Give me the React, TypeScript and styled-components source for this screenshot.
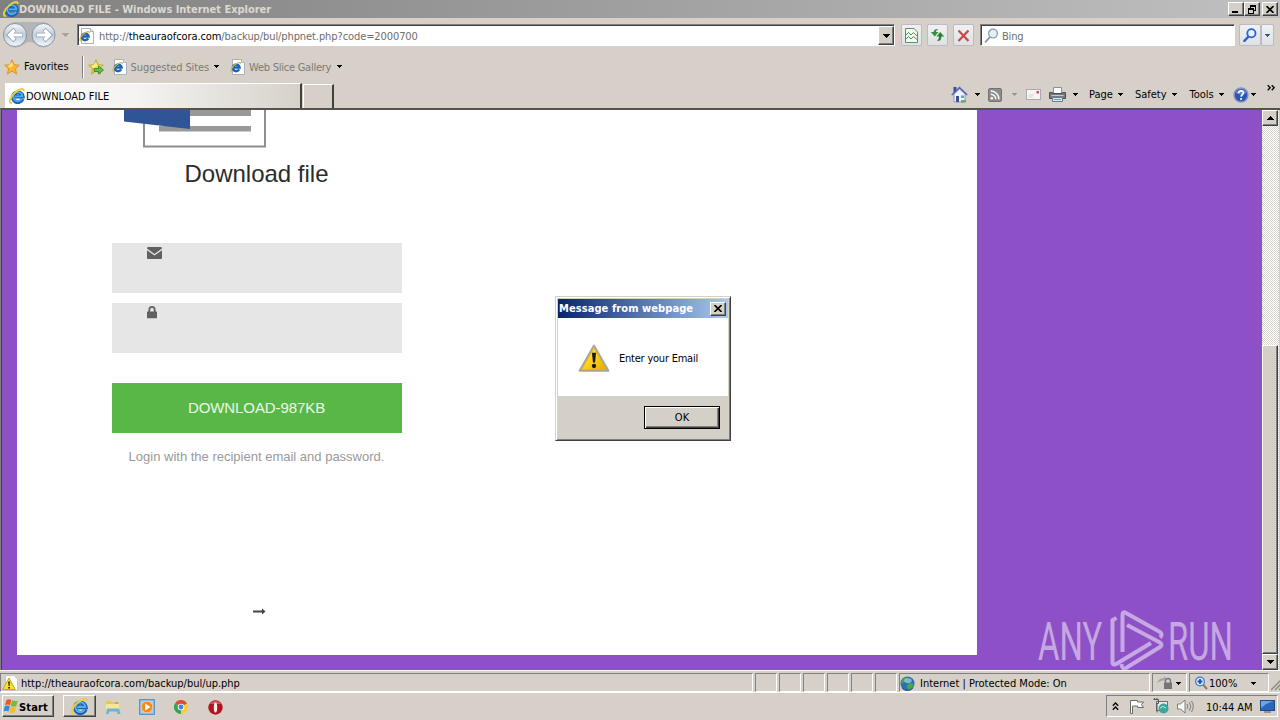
import React from 'react';
import styled, { createGlobalStyle, css } from 'styled-components';

const GlobalStyle = createGlobalStyle`
  * { box-sizing: border-box; }
  body {
    margin: 0;
    overflow: hidden;
    background: #d4d0c8;
    font-family: 'DejaVu Sans Condensed', 'DejaVu Sans', sans-serif;
    font-size: 11px;
    color: #000;
  }
  svg { display: block; flex: none; }
`;

const raised = css`
  border: 1px solid;
  border-color: #fff #404040 #404040 #fff;
  box-shadow: inset -1px -1px 0 #808080;
  background: #d4d0c8;
`;

const Screen = styled.div`
  width: 1280px;
  height: 720px;
  display: flex;
  flex-direction: column;
  background: #d6d0c8;
  overflow: hidden;
`;

const Label = styled.span<{ $ls?: number; $color?: string; $bold?: boolean; $ml?: number; $drop?: number }>`
  white-space: pre;
  line-height: 14px;
  padding-top: ${(p) => p.$drop ?? 0}px;
  letter-spacing: ${(p) => p.$ls ?? 0}px;
  color: ${(p) => p.$color ?? 'inherit'};
  font-weight: ${(p) => (p.$bold ? 700 : 400)};
  margin-left: ${(p) => p.$ml ?? 0}px;
`;

const Gap = styled.span<{ $w: number }>`
  flex: none;
  width: ${(p) => p.$w}px;
`;

const Grow = styled.span`
  flex: 1;
`;

/* ---------- browser chrome ---------- */

const TitleBar = styled.header`
  height: 18px;
  flex: none;
  display: flex;
  align-items: center;
  padding: 0 2px 0 3px;
  background: linear-gradient(90deg, #808080, #c0c0c0);
  color: #dcd8d0;
`;

const WindowButton = styled.button<{ $gap?: boolean }>`
  ${raised}
  width: 16px;
  height: 14px;
  flex: none;
  padding: 0;
  margin-left: ${(p) => (p.$gap ? 2 : 0)}px;
  display: flex;
  align-items: center;
  justify-content: center;
`;

const AddressRow = styled.div`
  height: 34px;
  flex: none;
  display: flex;
  align-items: center;
  padding-left: 2px;
`;

const SunkenBox = styled.div<{ $w: number }>`
  width: ${(p) => p.$w}px;
  height: 22px;
  display: flex;
  align-items: center;
  background: #fff;
  border: 1px solid;
  border-color: #808080 #fff #fff #808080;
  box-shadow: inset 1px 1px 0 #404040;
  padding: 1px 0 0 1px;
`;

const DropButton = styled.div`
  ${raised}
  width: 16px;
  height: 19px;
  display: flex;
  align-items: center;
  justify-content: center;
`;

const ToolButton = styled.div<{ $w?: number }>`
  width: ${(p) => p.$w ?? 21}px;
  height: 22px;
  display: flex;
  align-items: center;
  justify-content: center;
  border: 1px solid #b9bcc4;
  border-radius: 2px;
  background: linear-gradient(#f1f1f2, #dfe1e6);
`;

const FavoritesRow = styled.div`
  height: 29px;
  flex: none;
  display: flex;
  align-items: center;
  padding-left: 4px;
`;

const Divider = styled.span`
  width: 2px;
  height: 22px;
  border-left: 1px solid #808080;
  border-right: 1px solid #fff;
`;

const TabRow = styled.div`
  height: 27px;
  flex: none;
  display: flex;
  align-items: flex-start;
  padding: 1px 4px 0 5px;
`;

const Tab = styled.div`
  width: 297px;
  height: 25px;
  margin-top: 1px;
  display: flex;
  align-items: center;
  padding: 0 0 0 3px;
  background: linear-gradient(90deg, #fff, #f4f3f1 45%, #d6d2ca);
  border: 1px solid #fff;
  border-right: 2px solid #404040;
  border-bottom: 0;
`;

const NewTab = styled.div`
  width: 31px;
  height: 25px;
  margin: 2px 0 0 1px;
  border: 1px solid #fff;
  border-right: 2px solid #404040;
  border-bottom: 0;
`;

const CommandBar = styled.div`
  margin-left: auto;
  width: 325px;
  height: 25px;
  display: flex;
  align-items: center;
`;

/* ---------- page ---------- */

const Viewport = styled.main`
  height: 562px;
  flex: none;
  display: flex;
  border-top: 2px solid #55524e;
  border-left: 1px solid #808080;
  box-shadow: inset 1px 0 0 #404040;
  background: #8e50c6;
  padding-left: 16px;
  position: relative;
`;

const Sheet = styled.section`
  width: 960px;
  height: 545px;
  background: #fff;
  padding-left: 95px;
  font-family: 'Liberation Sans', Arial, sans-serif;
`;

const Column = styled.div`
  width: 290px;
  display: flex;
  flex-direction: column;
  align-items: center;
`;

const DocArt = styled.div`
  width: 290px;
  height: 38px;
  padding-left: 12px;
`;

const Heading = styled.h1`
  margin: 11px 1px 0 0;
  height: 30px;
  line-height: 30px;
  font-size: 24px;
  font-weight: 400;
  color: #2c2c2c;
  white-space: nowrap;
`;

const Field = styled.div<{ $mt: number; $pt: number }>`
  width: 290px;
  height: 50px;
  margin-top: ${(p) => p.$mt}px;
  padding: ${(p) => p.$pt}px 0 0 35px;
  background: #e6e6e6;
`;

const DownloadButton = styled.div`
  width: 290px;
  height: 50px;
  margin-top: 30px;
  padding-right: 1px;
  line-height: 50px;
  text-align: center;
  font-size: 15px;
  letter-spacing: -0.08px;
  color: #eaf7e6;
  background: #59b747;
`;

const Hint = styled.p`
  margin: 15px 1px 0 0;
  line-height: 18px;
  font-size: 13px;
  color: #999;
  white-space: nowrap;
`;

const ArrowSlot = styled.div`
  margin: 142px 0 0 4px;
`;

const ScrollBar = styled.div`
  margin-left: auto;
  width: 18px;
  height: 560px;
  display: flex;
  flex-direction: column;
  padding-right: 1px;
  border-right: 1px solid #d4d0c8;
  background: repeating-conic-gradient(#fff 0 25%, #d9d5ce 0 50%) 0 0 / 2px 2px;
`;

const ScrollButton = styled.div`
  ${raised}
  width: 16px;
  height: 16px;
  display: flex;
  align-items: center;
  justify-content: center;
`;

const Thumb = styled.div`
  ${raised}
  width: 16px;
  height: 309px;
  margin-top: auto;
`;

const Watermark = styled.svg`
  position: absolute;
  left: 1025px;
  top: 496px;
  overflow: visible;
`;

/* ---------- message box ---------- */

const Dialog = styled.div`
  position: absolute;
  left: 555px;
  top: 296px;
  width: 176px;
  height: 145px;
  padding: 2px;
  background: #d4d0c8;
  border: 1px solid;
  border-color: #d4d0c8 #404040 #404040 #d4d0c8;
  box-shadow: inset 1px 1px 0 #fff, inset -1px -1px 0 #808080;
`;

const DialogTitle = styled.div`
  height: 19px;
  display: flex;
  align-items: center;
  justify-content: space-between;
  padding: 0 2px 0 1px;
  color: #fff;
  background: linear-gradient(90deg, #0a246a, #a6caf0);
`;

const DialogBody = styled.div`
  height: 78px;
  display: flex;
  align-items: center;
  padding: 3px 0 0 20px;
  background: #fff;
`;

const DialogFooter = styled.div`
  height: 43px;
  display: flex;
  justify-content: flex-end;
  padding: 10px 8px 0 0;
`;

const OkButton = styled.div`
  width: 76px;
  height: 23px;
  display: flex;
  align-items: center;
  justify-content: center;
  border: 1px solid #000;
  box-shadow: inset 1px 1px 0 #fff, inset -1px -1px 0 #404040, inset -2px -2px 0 #808080;
`;

/* ---------- status bar and taskbar ---------- */

const StatusBar = styled.footer`
  height: 22px;
  flex: none;
  display: flex;
  align-items: flex-start;
  gap: 2px;
  padding-top: 2px;
  border-top: 1px solid #fff;
`;

const Pane = styled.div<{ $w: number; $pl?: number }>`
  width: ${(p) => p.$w}px;
  height: 19px;
  flex: none;
  display: flex;
  align-items: center;
  padding: 1px 0 0 ${(p) => p.$pl ?? 0}px;
  border: 1px solid;
  border-color: #808080 #fff #fff #808080;
`;

const Taskbar = styled.nav`
  flex: 1;
  display: flex;
  align-items: flex-start;
  padding: 2px 2px 0 2px;
  border-top: 1px solid #fff;
`;

const StartButton = styled.div`
  ${raised}
  width: 52px;
  height: 22px;
  display: flex;
  align-items: center;
`;

const TaskButton = styled.div`
  ${raised}
  width: 33px;
  height: 22px;
  margin: 0 0 0 9px;
  display: flex;
  align-items: center;
  justify-content: center;
`;

const QuickIcon = styled.div`
  width: 34px;
  height: 24px;
  display: flex;
  align-items: center;
  justify-content: center;
`;

const Tray = styled.div`
  width: 172px;
  height: 22px;
  margin-left: auto;
  display: flex;
  align-items: center;
  padding-left: 5px;
  border: 1px solid;
  border-color: #808080 #fff #fff #808080;
`;

/* ---------- icons ---------- */

const Caret: React.FC<{ color?: string; up?: boolean; w?: number }> = ({ color = '#000', up, w = 5 }) => (
  <svg width={w} height={(w + 1) / 2} viewBox={`0 0 ${w} ${(w + 1) / 2}`} shapeRendering="crispEdges">
    <path d={up ? `M0 ${(w + 1) / 2}H${w}L${w / 2} 0z` : `M0 0H${w}L${w / 2} ${(w + 1) / 2}z`} fill={color} />
  </svg>
);

const IELogo: React.FC<{ size?: number }> = ({ size = 16 }) => (
  <svg width={size} height={size} viewBox="0 0 16 16">
    <path d="M13.600 10.800A5 4.900 0 1 1 13.800 8.700H6" fill="none" stroke="#1b5fb4" strokeWidth="3.800" />
    <path d="M13 10.600A4.600 4.600 0 1 1 13.400 8.400H6" fill="none" stroke="#4fb0f2" strokeWidth="1.800" />
    <path d="M3 14.800C-.8 15.800.4 9 6 4.500 10 1.200 14.500-.4 15 2.800" fill="none" stroke="#e9cf3c" strokeWidth="2" />
  </svg>
);

const IEPage: React.FC = () => (
  <svg width="15" height="16" viewBox="0 0 15 16">
    <path d="M2.500.5H11.500L14.500 3.500V15.500H2.500z" fill="#fff" stroke="#a9b3bf" />
    <path d="M11.500.5V3.500h3" fill="#e3e8ee" stroke="#a9b3bf" />
    <path d="M9.200 10.400A3.400 3.300 0 1 1 9.600 8.600H4" fill="none" stroke="#1d62b6" strokeWidth="2.500" />
    <path d="M1.600 13C-.4 12 3 6 7 4.200 9 3.200 10.800 3.500 10.300 5.200" fill="none" stroke="#dcb93a" strokeWidth="1.200" />
  </svg>
);

const Star: React.FC<{ add?: boolean }> = ({ add }) => (
  <svg width="16" height="16" viewBox="0 0 16 16">
    <path
      d="M8 .8 10.100 5.700 15.300 6.200 11.400 9.700 12.600 15 8 12.200 3.400 15 4.600 9.700.7 6.200 5.900 5.700z"
      fill={add ? '#f7dc4d' : '#fbb62b'}
      stroke={add ? '#b99a2a' : '#d98a1b'}
      strokeWidth=".8"
    />
    <path d="M8 3 9.200 6.500 6 9 4 7z" fill="#fff2a8" opacity=".7" />
    {add && <path d="M6 9.500h4.500V7l5 4-5 4v-2.500H6z" fill="#5cc04a" stroke="#2c8527" strokeWidth=".8" />}
  </svg>
);

const NavButtons: React.FC = () => (
  <svg width="56" height="28" viewBox="0 0 56 28">
    <defs>
      <linearGradient id="orb" x2="0" y2="1">
        <stop offset="0" stopColor="#f6f8fa" />
        <stop offset=".5" stopColor="#c3cdd9" />
        <stop offset="1" stopColor="#f2f9fd" />
      </linearGradient>
    </defs>
    <path d="M13 1H42A13 13 0 0 1 42 26.500C35 26.500 33 21 28 21S20 26.500 13 26.500A12.800 12.800 0 0 1 13 1z" fill="#b4b5b6" />
    <circle cx="13" cy="14" r="11.500" fill="url(#orb)" stroke="#8793a3" />
    <circle cx="41.500" cy="14" r="11.500" fill="url(#orb)" stroke="#8793a3" />
    <path d="M20.500 14H8M13 8.300 7 14l6 5.700" fill="none" stroke="#8fa0b3" strokeWidth="4.400" />
    <path d="M20 14H8M12.500 9 7.500 14l5 5" fill="none" stroke="#fff" strokeWidth="3.200" />
    <path d="M34.500 14H47M42 8.300 48 14l-6 5.700" fill="none" stroke="#8fa0b3" strokeWidth="4.400" />
    <path d="M35 14H47M42.500 9l5 5-5 5" fill="none" stroke="#fff" strokeWidth="3.200" />
  </svg>
);

const Magnifier: React.FC<{ rim: string; glass: string; size?: number; bold?: boolean }> = ({
  rim,
  glass,
  size = 15,
  bold,
}) => (
  <svg width={size} height={size} viewBox="0 0 15 15">
    <path d="M6.200 8.800 1.500 13.800" stroke={rim} strokeWidth={bold ? 2.6 : 1.8} strokeLinecap="round" />
    <circle cx="9" cy="5.600" r="4.400" fill={glass} stroke={rim} strokeWidth={bold ? 2 : 1.2} />
  </svg>
);

const WarningSign: React.FC<{ size: number }> = ({ size }) => (
  <svg width={size} height={(size * 28) / 31} viewBox="0 0 31 28">
    <defs>
      <linearGradient id="warn" x2="1" y2="1">
        <stop offset="0" stopColor="#fff27a" />
        <stop offset=".5" stopColor="#fbd31c" />
        <stop offset="1" stopColor="#e0a400" />
      </linearGradient>
    </defs>
    <path d="M15.500 1.500 29.500 26H1.500z" fill="url(#warn)" stroke="#a9a59b" strokeWidth="1.800" strokeLinejoin="round" />
    <path d="M15.500 4 27.300 24.800H3.700z" fill="none" stroke="#e9b40d" strokeWidth=".8" />
    <path d="M13.500 8.500h4l-1 9.500h-2z" fill="#1c1a10" />
    <circle cx="15.500" cy="21.300" r="2.100" fill="#1c1a10" />
  </svg>
);

// the status bar version sits on a small white page and drops the grey rim
const PageWarning = () => (
  <svg width="16" height="16" viewBox="0 0 16 16">
    <path d="M3.500.5H12L15.500 4V15.500H3.500z" fill="#fff" stroke="#c9c7c2" />
    <path d="M7 3 13.300 14.500H.7z" fill="#fbe02a" stroke="#c9a51a" strokeLinejoin="round" />
    <path d="M6.200 6.500h1.700l-.3 4.500h-1zM6.200 12h1.700v1.600h-1.700z" fill="#1c1a10" />
  </svg>
);

const HomeIcon = () => (
  <svg width="17" height="17" viewBox="0 0 17 17">
    <path d="M3 8 8.500 3 14 8v8H3z" fill="#eef2fa" stroke="#7f8db0" strokeWidth=".8" />
    <path d="M2.500 1h3v4l-3 2z" fill="#3c4b9a" />
    <path d="M.8 9 8.500 1.600 16.200 9" fill="none" stroke="#5468b5" strokeWidth="1.600" />
    <path d="M5 10h3v6H5z" fill="#3d4f8c" />
    <path d="M10 9.500h3V12h-3z" fill="#5aa2dd" />
    <path d="M10 14h5v2.500h-5z" fill="#78a85c" />
  </svg>
);

const FeedIcon = () => (
  <svg width="14" height="14" viewBox="0 0 14 14">
    <rect x=".5" y=".5" width="13" height="13" rx="1.500" fill="#8d8d8b" stroke="#73736f" />
    <circle cx="3.800" cy="10.300" r="1.300" fill="#fff" />
    <path d="M2.800 6.200a5 5 0 0 1 5 5M2.800 3a8.200 8.200 0 0 1 8.200 8.200" fill="none" stroke="#fff" strokeWidth="1.400" />
  </svg>
);

const MailIcon = () => (
  <svg width="15" height="11" viewBox="0 0 15 11">
    <rect x=".5" y=".5" width="14" height="10" fill="#f5f4f6" stroke="#aaa8b0" />
    <path d="M10.500 2h2.500v2.500h-2.500z" fill="#cf4d5c" />
    <path d="M2.500 6h5M2.500 8h4" stroke="#d1d0d8" />
  </svg>
);

const PrinterIcon = () => (
  <svg width="17" height="15" viewBox="0 0 17 15">
    <path d="M4.500.5h8v6h-8z" fill="#fff" stroke="#8b929b" />
    <path d="M.5 5.500h3v1h10v-1h3v6H.5z" fill="#777c82" stroke="#4b4f54" />
    <path d="M2.500 8.500h12" stroke="#c5c9ce" />
    <path d="M3.500 10.500h10v4h-10z" fill="#d8ecf7" stroke="#6d7a86" />
    <path d="M5 12.500h7" stroke="#5a9cc8" />
  </svg>
);

const HelpIcon = () => (
  <svg width="16" height="16" viewBox="0 0 16 16">
    <circle cx="8" cy="8" r="7" fill="#2e55b4" stroke="#8796c2" strokeWidth="1.400" />
    <path d="M2.500 6a6 6 0 0 1 11 0Q8 8.500 2.500 6z" fill="#7e9fe2" opacity=".7" />
    <path d="M5.600 6.200C5.600 3 10.600 3.200 10.400 6c-.1 1.600-2.200 1.700-2.300 3.600" fill="none" stroke="#fff" strokeWidth="1.700" />
    <circle cx="8.100" cy="12" r="1.100" fill="#fff" />
  </svg>
);

const GlobeIcon = () => (
  <svg width="15" height="15" viewBox="0 0 16 16">
    <circle cx="8" cy="8" r="7.500" fill="#2c6fb5" />
    <path d="M2 4.500C4 1 8 .5 9 2 8 4 6 4 6 6 4 6 3 8 1 8zM9 8.500c2-1 5-1 5.500 1-1 4-5 5-6 5 0-2-1.500-3-1.500-4z" fill="#45a84a" />
    <ellipse cx="8.500" cy="5" rx="4" ry="2.600" fill="#b7e3f5" opacity=".6" />
    <path d="M2 12.500a7.500 7.500 0 0 0 12 0" fill="none" stroke="#1c3f78" />
  </svg>
);

const FlagLogo = () => (
  <svg width="17" height="16" viewBox="0 0 17 16">
    <path d="M3.500 2Q6 .4 8.300 2L7 7.300Q4.500 5.800 2 7.300z" fill="#e8582a" />
    <path d="M9 2.300q3 1.500 5.800.2L13.300 8q-3 1.300-5.600 0z" fill="#79b93c" />
    <path d="M1.800 8.200q2.600-1.500 5 0L5.500 13.500q-2.400-1.500-5 0z" fill="#3d86d6" />
    <path d="M7.500 8.800q2.800 1.400 5.600.1L11.800 14.300q-3 1.200-5.600-.1z" fill="#f4bd27" />
  </svg>
);

const FolderIcon = () => (
  <svg width="16" height="16" viewBox="0 0 16 16">
    <path d="M1 2h5l1 1.500h7V9H1z" fill="#e7c65c" />
    <path d="M1 5h13v6H1z" fill="#f8e694" />
    <path d="M2 9.500h12l1.500 5.500h-3l-1-2.500h-7L3.500 15H1z" fill="#6db4dd" />
    <path d="M10 3h3v2h-3z" fill="#7fc477" />
  </svg>
);

const MediaIcon = () => (
  <svg width="16" height="16" viewBox="0 0 16 16">
    <rect x=".7" y=".7" width="14.600" height="14.600" fill="#a6cdec" stroke="#4d8fc9" strokeWidth="1.200" />
    <circle cx="8" cy="8" r="5.800" fill="#f28a1c" stroke="#fad09c" strokeWidth=".8" />
    <path d="M6.200 4.600 11.500 8l-5.300 3.400z" fill="#fff" />
  </svg>
);

const ChromeIcon = () => (
  <svg width="14" height="14" viewBox="0 0 14 14">
    <path d="M7 7 .9 3.500A7 7 0 0 1 13.100 3.500z" fill="#dd4b39" />
    <path d="M7 7 13.100 3.500A7 7 0 0 1 7 14z" fill="#fccd34" />
    <path d="M7 7V14A7 7 0 0 1 .9 3.500z" fill="#38a350" />
    <circle cx="7" cy="7" r="3.300" fill="#f3f3f1" />
    <circle cx="7" cy="7" r="2.400" fill="#4285e4" />
  </svg>
);

const OperaIcon = () => (
  <svg width="15" height="15" viewBox="0 0 15 15">
    <circle cx="7.500" cy="7.500" r="7.200" fill="#b3141c" />
    <path d="M2 4a6.500 6.500 0 0 1 11 0z" fill="#e2707a" opacity=".7" />
    <ellipse cx="7.500" cy="7.500" rx="1.700" ry="5" fill="#f6eded" />
  </svg>
);

/* ---------- sections ---------- */

const AddressBar: React.FC = () => (
  <AddressRow>
    <NavButtons />
    <Gap $w={4} />
    <Caret color="#a9a59e" w={7} />
    <Gap $w={8} />
    <SunkenBox $w={818}>
      <IEPage />
      <Label $ml={5} $ls={-0.09} $color="#6d6d6d" $drop={2}>
        http://
      </Label>
      <Label $ls={-0.09} $drop={2}>
        theauraofcora.com
      </Label>
      <Label $ls={-0.09} $color="#6d6d6d" $drop={2}>
        /backup/bul/phpnet.php?code=2000700
      </Label>
      <Grow />
      <DropButton>
        <Caret w={7} />
      </DropButton>
    </SunkenBox>
    <Gap $w={6} />
    <ToolButton>
      <svg width="13" height="15" viewBox="0 0 13 15">
        <path d="M.5.5H9L12.500 4V14.500H.5z" fill="#f4faf3" stroke="#4c9a55" />
        <path
          d="M1 7l2.500-2.500L6 7 8.500 4.500 12 8M1 11l2.500-2.500L6 11l2.500-2.500L12 11.500"
          fill="none"
          stroke="#3f9a48"
        />
      </svg>
    </ToolButton>
    <Gap $w={5} />
    <ToolButton>
      <svg width="15" height="14" viewBox="0 0 15 14">
        <path d="M7.500 1C4.500 1 3.700 2.500 3.700 4H.8l4 4.500L8.500 4H6c0-1 .5-1.600 1.500-2z" fill="#359140" />
        <path d="M7.500 13c3 0 3.800-1.500 3.800-4.500h2.900l-4-4.500L6.500 8.500H9c0 2-.5 3-1.500 3.500z" fill="#2c7f37" />
      </svg>
    </ToolButton>
    <Gap $w={5} />
    <ToolButton>
      <svg width="13" height="13" viewBox="0 0 13 13">
        <path d="M1.500 1.500 11.500 12M11.500 1.500 1.500 12" stroke="#c94848" strokeWidth="2.200" />
      </svg>
    </ToolButton>
    <Gap $w={6} />
    <SunkenBox $w={255}>
      <Gap $w={2} />
      <Magnifier rim="#8b9aa8" glass="#dff0fa" />
      <Label $ml={3} $ls={-0.2} $color="#6d6d6d" $drop={2}>
        Bing
      </Label>
    </SunkenBox>
    <Gap $w={4} />
    <ToolButton $w={22}>
      <Magnifier rim="#2f62c4" glass="#e6effc" size={14} bold />
    </ToolButton>
    <ToolButton $w={13}>
      <Caret color="#2458a8" />
    </ToolButton>
  </AddressRow>
);

const Favorites: React.FC = () => (
  <FavoritesRow>
    <Star />
    <Label $ml={4}>Favorites</Label>
    <Gap $w={13} />
    <Divider />
    <Gap $w={4} />
    <Star add />
    <Gap $w={8} />
    <IEPage />
    <Label $ml={4} $ls={-0.1} $color="#7d7a75" $drop={2}>
      Suggested Sites
    </Label>
    <Gap $w={5} />
    <Caret />
    <Gap $w={11} />
    <IEPage />
    <Label $ml={4} $ls={-0.25} $color="#7d7a75" $drop={2}>
      Web Slice Gallery
    </Label>
    <Gap $w={6} />
    <Caret />
  </FavoritesRow>
);

const Tabs: React.FC = () => (
  <TabRow>
    <Tab>
      <IELogo />
      <Label $ml={1} $drop={1}>
        DOWNLOAD FILE
      </Label>
    </Tab>
    <NewTab />
    <CommandBar>
      <HomeIcon />
      <Gap $w={7} />
      <Caret />
      <Gap $w={8} />
      <FeedIcon />
      <Gap $w={10} />
      <Caret color="#9b978f" />
      <Gap $w={9} />
      <MailIcon />
      <Gap $w={8} />
      <PrinterIcon />
      <Gap $w={7} />
      <Caret />
      <Gap $w={11} />
      <Label>Page</Label>
      <Gap $w={5} />
      <Caret />
      <Gap $w={12} />
      <Label>Safety</Label>
      <Gap $w={5} />
      <Caret />
      <Gap $w={13} />
      <Label>Tools</Label>
      <Gap $w={5} />
      <Caret />
      <Gap $w={9} />
      <HelpIcon />
      <Gap $w={2} />
      <Caret />
      <Gap $w={11} />
      <svg width="8" height="23" viewBox="0 0 8 23">
        <path d="M.7 2.200 3.200 4.700.7 7.200M4.700 2.200 7.200 4.700 4.700 7.200" fill="none" stroke="#000" strokeWidth="1.300" />
      </svg>
    </CommandBar>
  </TabRow>
);

const AnyRunMark: React.FC = () => (
  <Watermark width="235" height="66" viewBox="1026 606 235 66">
    <g fill="#fff" fillOpacity=".5" fontFamily="Roboto, sans-serif" fontWeight="400" fontSize="53">
      <text transform="translate(1038 660) scale(.62 1)">ANY</text>
      <text transform="translate(1168 660) scale(.62 1)">RUN</text>
    </g>
    <g opacity=".5" fill="none" stroke="#fff" strokeWidth="4" strokeLinejoin="round">
      <path d="M1116.500 618 1112.500 620V662Q1112.500 666 1117 663.500L1151 643" />
      <path d="M1122.500 652V615Q1122.500 611 1126 613L1160 632Q1163 635 1160 637.500" />
      <path d="M1127 625 1160 642.500Q1163 645 1160 647L1126 668Q1122 670 1121.500 664" />
    </g>
  </Watermark>
);

const PageContent: React.FC = () => (
  <Viewport>
    <Sheet>
      <Column>
        <DocArt>
          <svg width="143" height="38" viewBox="0 0 143 38">
            <path d="M20 -5H141V36.500H20z" fill="#fff" stroke="#8e8e8e" strokeWidth="2" />
            <path d="M35 0H127V6H35zM35 16H127V21.500H35z" fill="#999" />
            <path d="M0 0H66V19L0 11.500z" fill="#2f5597" />
          </svg>
        </DocArt>
        <Heading>Download file</Heading>
        <Field $mt={54} $pt={4}>
          <svg width="16" height="13" viewBox="0 0 16 13">
            <path
              d="M1 0H14Q15 0 15 1.500L7.500 7 0 1.500Q0 0 1 0zM0 3.200 7.500 8.600 15 3.200V11Q15 12 14 12H1Q0 12 0 11z"
              fill="#606060"
            />
          </svg>
        </Field>
        <Field $mt={10} $pt={3}>
          <svg width="11" height="13" viewBox="0 0 11 13">
            <path d="M2.300 6V3.800a2.700 2.900 0 0 1 5.400 0V6" fill="none" stroke="#606060" strokeWidth="1.800" />
            <rect x="0" y="5.500" width="10" height="6.800" rx=".6" fill="#606060" />
          </svg>
        </Field>
        <DownloadButton>DOWNLOAD-987KB</DownloadButton>
        <Hint>Login with the recipient email and password.</Hint>
        <ArrowSlot>
          <svg width="13" height="7" viewBox="0 0 13 7">
            <path d="M0 2.500H9V.5L12.500 3.500 9 6.500V4.500H0z" fill="#444" />
          </svg>
        </ArrowSlot>
      </Column>
    </Sheet>
    <AnyRunMark />
    <ScrollBar>
      <ScrollButton>
        <Caret w={7} up />
      </ScrollButton>
      <Thumb />
      <ScrollButton>
        <Caret w={7} />
      </ScrollButton>
    </ScrollBar>
  </Viewport>
);

const MessageBox: React.FC = () => (
  <Dialog>
    <DialogTitle>
      <Label $bold $ls={0.08}>
        Message from webpage
      </Label>
      <WindowButton>
        <svg width="8" height="7" viewBox="0 0 8 7">
          <path d="M.5 0 7.500 7M7.500 0 .5 7" stroke="#000" strokeWidth="1.600" />
        </svg>
      </WindowButton>
    </DialogTitle>
    <DialogBody>
      <WarningSign size={32} />
      <Label $ml={9} $ls={-0.22}>
        Enter your Email
      </Label>
    </DialogBody>
    <DialogFooter>
      <OkButton>
        <Label>OK</Label>
      </OkButton>
    </DialogFooter>
  </Dialog>
);

const Status: React.FC = () => (
  <StatusBar>
    <Pane $w={753} $pl={1}>
      <PageWarning />
      <Label $ml={3} $ls={-0.03} $drop={1}>
        http://theauraofcora.com/backup/bul/up.php
      </Label>
    </Pane>
    {[0, 1, 2, 3, 4, 5].map((n) => (
      <Pane key={n} $w={22} />
    ))}
    <Pane $w={251} $pl={0}>
      <GlobeIcon />
      <Label $ml={5} $drop={1}>
        Internet | Protected Mode: On
      </Label>
    </Pane>
    <Pane $w={35} $pl={4}>
      <svg width="16" height="14" viewBox="0 0 16 14">
        <path d="M0 7Q2 2 7 2V0l3 3-3 3V4Q3 5 0 7z" fill="#a7a5a0" />
        <path d="M8.500 7V5a2.500 2.500 0 0 1 5 0V7" fill="none" stroke="#77757a" strokeWidth="1.300" />
        <rect x="7" y="6.500" width="8" height="6.500" fill="#77757a" />
      </svg>
      <Gap $w={3} />
      <Caret />
    </Pane>
    <Pane $w={80} $pl={5}>
      <svg width="13" height="14" viewBox="0 0 13 14">
        <path d="M8 8.500 12 13" stroke="#9a7b58" strokeWidth="2" />
        <circle cx="5" cy="5.500" r="4.400" fill="#d8ebfb" stroke="#3f77c8" strokeWidth="1.200" />
        <path d="M2.500 5.500h5M5 3v5" stroke="#1d53b0" strokeWidth="1.800" />
      </svg>
      <Label $ml={1} $drop={1}>
        100%
      </Label>
      <Gap $w={14} />
      <Caret />
    </Pane>
    <svg width="11" height="18" viewBox="0 0 11 18">
      <path d="M0 17 11 6M4 17l7-7M8 17l3-3" stroke="#8a8680" strokeWidth="1.400" />
    </svg>
  </StatusBar>
);

const Tasks: React.FC = () => (
  <Taskbar>
    <StartButton>
      <FlagLogo />
      <Label $bold $ml={-1} $ls={0.15} $drop={3}>
        Start
      </Label>
    </StartButton>
    <TaskButton>
      <IELogo size={17} />
    </TaskButton>
    <QuickIcon>
      <FolderIcon />
    </QuickIcon>
    <QuickIcon>
      <MediaIcon />
    </QuickIcon>
    <QuickIcon>
      <ChromeIcon />
    </QuickIcon>
    <QuickIcon>
      <OperaIcon />
    </QuickIcon>
    <Tray>
      <svg width="7" height="9" viewBox="0 0 7 9">
        <path d="M.8 3.700 3.500 1l2.700 2.700M.8 7.700 3.500 5l2.700 2.700" fill="none" stroke="#000" strokeWidth="1.300" />
      </svg>
      <Gap $w={10} />
      <svg width="16" height="15" viewBox="0 0 16 15">
        <path d="M1.500 14.500V1.500H8.500V3H14.500L12.500 5.500 14.500 8.500H8.500V7H3.500V14.500z" fill="#fff" stroke="#6e6c68" />
      </svg>
      <Gap $w={8} />
      <svg width="16" height="16" viewBox="0 0 16 16">
        <path d="M3.500 3.500h11v9h-11z" fill="#e9eff0" stroke="#6b6b68" />
        <path d="M.5 1.500h5v4h-1.500v9M1.500 1.500V0M4 1.500V0" fill="none" stroke="#555" />
        <circle cx="10.500" cy="10.500" r="5" fill="#3aa79b" />
        <path d="M7 10q3-3 6 0" fill="none" stroke="#bfe8e2" />
      </svg>
      <Gap $w={8} />
      <svg width="17" height="15" viewBox="0 0 17 15">
        <path d="M.5 5H3.500L8 1V14L3.500 10H.5z" fill="#fff" stroke="#7c7a75" />
        <path d="M10 5q1.500 2.500 0 5M12.300 3.300q3 4.200 0 8.400M14.500 2q3.500 5.500 0 11" fill="none" stroke="#7c7a75" />
      </svg>
      <Gap $w={12} />
      <Label $ls={-0.05} $drop={3}>
        10:44 AM
      </Label>
      <Gap $w={7} />
      <svg width="15" height="13" viewBox="0 0 15 13">
        <rect x=".5" y=".5" width="14" height="10" fill="#2a66bd" stroke="#26477d" />
        <path d="M1 1h13Q6 3 1 8z" fill="#6aa6e6" />
        <path d="M4 12h7" stroke="#5c5c5c" />
      </svg>
    </Tray>
  </Taskbar>
);

const App: React.FC = () => (
  <>
    <GlobalStyle />
    <Screen>
      <TitleBar>
        <IELogo />
        <Label $bold $ls={-0.03} $drop={1}>
          DOWNLOAD FILE - Windows Internet Explorer
        </Label>
        <Grow />
        <WindowButton>
          <svg width="8" height="8" viewBox="0 0 8 8">
            <path d="M0 6h6v2H0z" />
          </svg>
        </WindowButton>
        <WindowButton>
          <svg width="9" height="9" viewBox="0 0 9 9" shapeRendering="crispEdges">
            <path d="M2 0h6v6H6V5h1V2H3v1H2zM0 3h6v6H0zM1 5v3h4V5z" fillRule="evenodd" />
          </svg>
        </WindowButton>
        <WindowButton $gap>
          <svg width="8" height="7" viewBox="0 0 8 7">
            <path d="M.5 0 7.500 7M7.500 0 .5 7" stroke="#000" strokeWidth="1.600" />
          </svg>
        </WindowButton>
      </TitleBar>
      <AddressBar />
      <Favorites />
      <Tabs />
      <PageContent />
      <Status />
      <Tasks />
    </Screen>
    <MessageBox />
  </>
);

export default App;
